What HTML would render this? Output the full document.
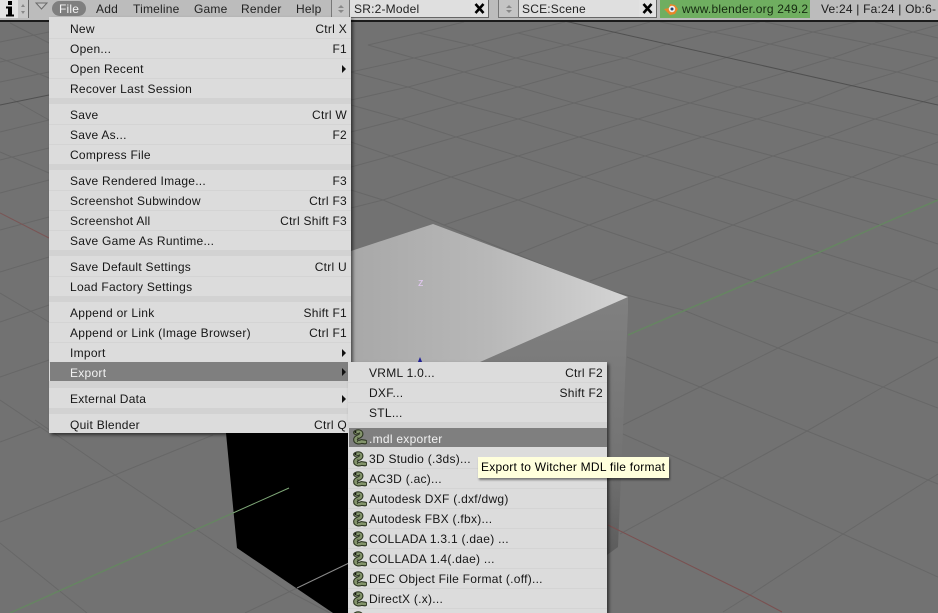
<!DOCTYPE html>
<html><head><meta charset="utf-8">
<style>
html,body{margin:0;padding:0;background:#727272}
#p{position:relative;width:938px;height:613px;overflow:hidden;background:#727272;font-family:"Liberation Sans",sans-serif;font-size:12px;color:#161616;letter-spacing:.27px}
#p div{position:absolute;white-space:nowrap}
svg{position:absolute;left:0;top:0}
.m{background:#dcdcdc;box-shadow:2px 2px 3px rgba(0,0,0,.55)}
.r{left:0;right:0;height:20px;line-height:21px;border-bottom:1px solid #d4d4d4;box-sizing:border-box;text-indent:21px}
.b{left:0;right:0;height:6px;background:#d2d2d2}
.s{line-height:21px;height:20px;text-align:right;right:4px;left:auto;text-indent:0}
.a{width:0;height:0;right:5px;top:6px;border-left:4px solid #111;border-top:4px solid transparent;border-bottom:4px solid transparent}
.h{top:1px;height:16px;line-height:17px;color:#222;letter-spacing:.2px}
.sel{background:#7f7f7f;color:#f2f2f2;border-bottom:0;line-height:22px}
.t{text-indent:21px}
.i{position:absolute;left:3px;top:2px;width:16px;height:16px}
.x{top:0;width:18px;height:18px;background:#e2e2e2;border-right:1px solid #666;border-bottom:1px solid #666;box-sizing:border-box}
</style></head><body><div id="p">

<svg width="938" height="613" viewBox="0 0 938 613">
<defs>
<linearGradient id="top" x1="351" y1="0" x2="628" y2="0" gradientUnits="userSpaceOnUse"><stop offset="0" stop-color="#a8a8a8"/><stop offset=".5" stop-color="#b8b8b8"/><stop offset="1" stop-color="#d4d4d4"/></linearGradient>
<linearGradient id="side" x1="0" y1="297" x2="0" y2="555" gradientUnits="userSpaceOnUse"><stop offset="0" stop-color="#808080"/><stop offset=".6" stop-color="#747474"/><stop offset="1" stop-color="#5c5c5c"/></linearGradient>
<symbol id="sn" viewBox="0 0 16 16">
<path d="M4.500 3.500C7 2 10.500 2.500 10 5.500C9.500 8 4.500 7.500 4.500 10.500C4.500 13.500 8.500 13.500 10.500 12.500L14 13" fill="none" stroke="#2e3722" stroke-width="4.800" stroke-linecap="round"/>
<path d="M4.500 3.500C7 2 10.500 2.500 10 5.500C9.500 8 4.500 7.500 4.500 10.500C4.500 13.500 8.500 13.500 10.500 12.500L14 13" fill="none" stroke="#84956c" stroke-width="2.600" stroke-linecap="round"/>
<path d="M8 3.500l1 1M6.500 8.500l1 1M6 12l1 .5" stroke="#2e3722" stroke-width="1"/>
<circle cx="4.500" cy="3" r="1" fill="#111"/>
</symbol>
</defs>
<g fill="none" stroke="#676767" stroke-width="1">
<polyline points="419,33 471,45 516,58 571,72 628,87 690,103 757,119 827,137 902,156 938,165"/>
<polyline points="368,45 414,58 464,72 518,87 574,103 638,119 702,137 773,156 852,177 938,200"/>
<polyline points="351,72 408,87 459,103 518,119 579,137 645,156 717,177 795,200 880,225 938,244"/>
<polyline points="351,105 401,119 456,137 518,156 584,177 655,200 733,225 820,252 913,281 938,290"/>
<polyline points="351,142 391,156 451,177 518,200 589,225 668,252 753,281 848,313 938,343"/>
<polyline points="351,190 383,200 444,225 600,288 683,310 778,348 883,387 938,408"/>
<polyline points="627,357 700,387 807,431 928,480 938,484"/>
<polyline points="623,434 722,478 843,534 938,577"/>
<polyline points="518,33 566,45 625,58 678,72 738,87 807,103 875,119 938,135"/>
<polyline points="660,22 713,32 770,44 832,58 897,72 938,82"/>
<polyline points="765,22 813,32 872,44 938,58"/>
<polyline points="875,22 913,32 938,38"/>
<polyline points="368,45 419,33 464,22"/>
<polyline points="351,72 414,58 471,45 518,33 565,22"/>
<polyline points="351,100 408,87 464,72 516,58 566,45 611,33 650,22"/>
<polyline points="351,132 401,119 459,103 518,87 571,72 625,58 667,44 713,32 760,22"/>
<polyline points="351,167 391,156 456,137 518,119 574,103 628,87 678,72 725,58 770,44 813,32 860,21"/>
<polyline points="351,208 383,200 451,177 518,156 579,137 638,119 690,103 738,87 787,72 832,58 872,44 913,32 938,25"/>
<polyline points="444,225 518,200 584,177 645,156 702,137 757,119 807,103 848,87 897,72 938,58"/>
<polyline points="500,261 589,225 655,200 717,177 773,156 827,137 875,119 920,103 938,96"/>
<polyline points="590,281 668,252 733,225 795,200 852,177 902,156 938,142"/>
<polyline points="623,425 700,387 778,348 848,313 913,281 938,268"/>
<polyline points="620,534 722,478 807,431 883,387 938,357"/>
<polyline points="723,612 750,595 843,534 928,480 938,474"/>
<polyline points="10,23 49,43"/><polyline points="0,58 49,78"/><polyline points="10,98 49,120"/><polyline points="0,152 49,173"/><polyline points="0,293 49,322"/><polyline points="0,400 49,433"/>
<polyline points="0,42 49,32"/><polyline points="0,62 49,52"/><polyline points="0,82 49,72"/><polyline points="0,132 49,120"/><polyline points="0,160 49,148"/><polyline points="0,193 49,180"/><polyline points="0,230 49,217"/><polyline points="0,272 49,257"/><polyline points="0,322 49,305"/><polyline points="0,377 49,360"/>
<polyline points="0,442 40,427"/><polyline points="0,522 115,475 213,435"/>
<polyline points="0,543 87,613"/><polyline points="35,420 115,475 197,530 290,592 330,613"/>
<polyline points="245,613 297,588"/>
</g>
<polyline points="560,20 600,29 938,105" fill="none" stroke="#505050"/>
<polyline points="0,105 49,95" fill="none" stroke="#505050"/>
<polyline points="628,335 753,281 820,252 880,225 938,200" fill="none" stroke="#668562" stroke-width="1.500"/>
<polyline points="10,613 233,513" fill="none" stroke="#668562" stroke-width="1.500"/>
<polyline points="0,213 49,238" fill="none" stroke="#7a5555"/>
<polygon points="628,297 628,310 618,547 607,555 607,362 480,362" fill="url(#side)"/>
<polygon points="433,224 628,297 480,362 351,362 351,251" fill="url(#top)"/>
<polyline points="608,525 750,595 782,612" fill="none" stroke="#7a5050"/>
<polygon points="226,433 237,548 333,613 349,613 349,433" fill="#000"/>
<polyline points="233,513 289,488" fill="none" stroke="#7fa878"/>
<polyline points="297,588 349,563" fill="none" stroke="#8a8a8a"/>
<path d="M420 357l-2.500 6h5z" fill="#22229a"/>
</svg>
<div style="left:418px;top:277px;color:#e0c8f0;font-size:11px;letter-spacing:0">z</div>

<!-- header -->
<div style="left:0;top:0;width:938px;height:20px;background:#bcbcbc;border-bottom:2px solid #1c1c1c"></div>
<div style="left:0;top:0;width:18px;height:18px;background:#e4e4e4"></div>
<div style="left:18px;top:0;width:10px;height:18px;background:#c8c8c8;border-right:1px solid #666"></div>
<svg style="left:3px;top:1px" width="14" height="16"><rect x="5" y="0" width="4" height="4" fill="#000"/><path d="M3 5.500h6v8h2v2H3v-2h2v-6H3z" fill="#000"/></svg>
<svg style="left:18px;top:0" width="10" height="18"><path d="M3 7l2-3 2 3zM3 11l2 3 2-3z" fill="#888"/></svg>
<svg style="left:35px;top:2px" width="14" height="10"><path d="M1 1h11l-5.500 6z" fill="#c4c4c4" stroke="#6a6a6a"/></svg>
<div style="left:52px;top:1px;width:34px;height:15px;background:#7f7f7f;border-radius:8px"></div>
<div class="h" style="left:59px;color:#f4f4f4">File</div>
<div class="h" style="left:96px">Add</div>
<div class="h" style="left:133px">Timeline</div>
<div class="h" style="left:194px">Game</div>
<div class="h" style="left:241px">Render</div>
<div class="h" style="left:296px">Help</div>

<div style="left:331px;top:0;width:19px;height:18px;background:#c4c4c4;border:1px solid #777;border-top:0;box-sizing:border-box"></div>
<svg style="left:336px;top:2px" width="10" height="14"><path d="M2 6l3-3 3 3zM2 8l3 3 3-3z" fill="#888"/></svg>
<div style="left:350px;top:0;width:121px;height:18px;background:#dfdfdf;border-bottom:1px solid #666;box-sizing:border-box"></div>
<div class="h" style="left:354px;color:#222">SR:2-Model</div>
<div class="x" style="left:471px"><svg width="18" height="18"><path d="M4.500 4l8 9M12.500 4l-8 9" stroke="#000" stroke-width="2.600"/></svg></div>

<div style="left:498px;top:0;width:21px;height:18px;background:#c4c4c4;border:1px solid #777;border-top:0;box-sizing:border-box"></div>
<svg style="left:504px;top:2px" width="10" height="14"><path d="M2 6l3-3 3 3zM2 8l3 3 3-3z" fill="#888"/></svg>
<div style="left:519px;top:0;width:120px;height:18px;background:#dfdfdf;border-bottom:1px solid #666;box-sizing:border-box"></div>
<div class="h" style="left:522px;color:#222">SCE:Scene</div>
<div class="x" style="left:639px"><svg width="18" height="18"><path d="M4.500 4l8 9M12.500 4l-8 9" stroke="#000" stroke-width="2.600"/></svg></div>

<div style="left:660px;top:0;width:150px;height:18px;background:#6fae60"></div>
<svg style="left:663px;top:1px" width="16" height="15"><path d="M1 8l5-1 1-4 5 1 3 4-3 5-5 1-3-3z" fill="#e8862a"/><circle cx="9" cy="8" r="3.200" fill="#f0f0f0"/><circle cx="9" cy="8" r="1.500" fill="#23406b"/></svg>
<div class="h" style="left:682px;color:#152a10;width:128px;overflow:hidden">www.blender.org 249.2</div>
<div class="h" style="left:821px;color:#1a1a1a">Ve:24 | Fa:24 | Ob:6-</div>

<!-- file menu -->
<div class="m" style="left:49px;top:17px;width:302px;height:416px">
<div class="r" style="top:2px">New</div><div class="s" style="top:2px">Ctrl X</div>
<div class="r" style="top:22px">Open...</div><div class="s" style="top:22px">F1</div>
<div class="r" style="top:42px">Open Recent<div class="a"></div></div>
<div class="r" style="top:62px">Recover Last Session</div>
<div class="b" style="top:81px"></div>
<div class="r" style="top:88px">Save</div><div class="s" style="top:88px">Ctrl W</div>
<div class="r" style="top:108px">Save As...</div><div class="s" style="top:108px">F2</div>
<div class="r" style="top:128px">Compress File</div>
<div class="b" style="top:147px"></div>
<div class="r" style="top:154px">Save Rendered Image...</div><div class="s" style="top:154px">F3</div>
<div class="r" style="top:174px">Screenshot Subwindow</div><div class="s" style="top:174px">Ctrl F3</div>
<div class="r" style="top:194px">Screenshot All</div><div class="s" style="top:194px">Ctrl Shift F3</div>
<div class="r" style="top:214px">Save Game As Runtime...</div>
<div class="b" style="top:233px"></div>
<div class="r" style="top:240px">Save Default Settings</div><div class="s" style="top:240px">Ctrl U</div>
<div class="r" style="top:260px">Load Factory Settings</div>
<div class="b" style="top:279px"></div>
<div class="r" style="top:286px">Append or Link</div><div class="s" style="top:286px">Shift F1</div>
<div class="r" style="top:306px">Append or Link (Image Browser)</div><div class="s" style="top:306px">Ctrl F1</div>
<div class="r" style="top:326px">Import<div class="a"></div></div>
<div class="r sel" style="top:345px;left:1px;height:19px;text-indent:20px">Export<div class="a"></div></div>
<div class="b" style="top:364px;height:7px"></div>
<div class="r" style="top:372px">External Data<div class="a"></div></div>
<div class="b" style="top:391px"></div>
<div class="r" style="top:398px;border:0;height:18px">Quit Blender</div><div class="s" style="top:398px">Ctrl Q</div>
</div>

<!-- export submenu -->
<div class="m" style="left:348px;top:362px;width:259px;height:260px">
<div class="r t" style="top:1px">VRML 1.0...</div><div class="s" style="top:1px">Ctrl F2</div>
<div class="r t" style="top:21px">DXF...</div><div class="s" style="top:21px">Shift F2</div>
<div class="r t" style="top:41px">STL...</div>
<div class="b" style="top:60px"></div>
<div class="r t sel" style="top:66px;left:1px;height:19px;text-indent:20px"><svg class="i" style="left:2px;top:1px"><use href="#sn"/></svg>.mdl exporter</div>
<div class="r t" style="top:87px"><svg class="i"><use href="#sn"/></svg>3D Studio (.3ds)...</div>
<div class="r t" style="top:107px"><svg class="i"><use href="#sn"/></svg>AC3D (.ac)...</div>
<div class="r t" style="top:127px"><svg class="i"><use href="#sn"/></svg>Autodesk DXF (.dxf/dwg)</div>
<div class="r t" style="top:147px"><svg class="i"><use href="#sn"/></svg>Autodesk FBX (.fbx)...</div>
<div class="r t" style="top:167px"><svg class="i"><use href="#sn"/></svg>COLLADA 1.3.1 (.dae) ...</div>
<div class="r t" style="top:187px"><svg class="i"><use href="#sn"/></svg>COLLADA 1.4(.dae) ...</div>
<div class="r t" style="top:207px"><svg class="i"><use href="#sn"/></svg>DEC Object File Format (.off)...</div>
<div class="r t" style="top:227px"><svg class="i"><use href="#sn"/></svg>DirectX (.x)...</div>
<div class="r t" style="top:247px"><svg class="i"><use href="#sn"/></svg></div>
</div>

<!-- tooltip -->
<div style="left:478px;top:457px;width:191px;height:21px;background:#ffffdc;box-shadow:1px 2px 2px rgba(0,0,0,.45);color:#000;line-height:21px;text-indent:3px;letter-spacing:.24px">Export to Witcher MDL file format</div>

</div></body></html>
